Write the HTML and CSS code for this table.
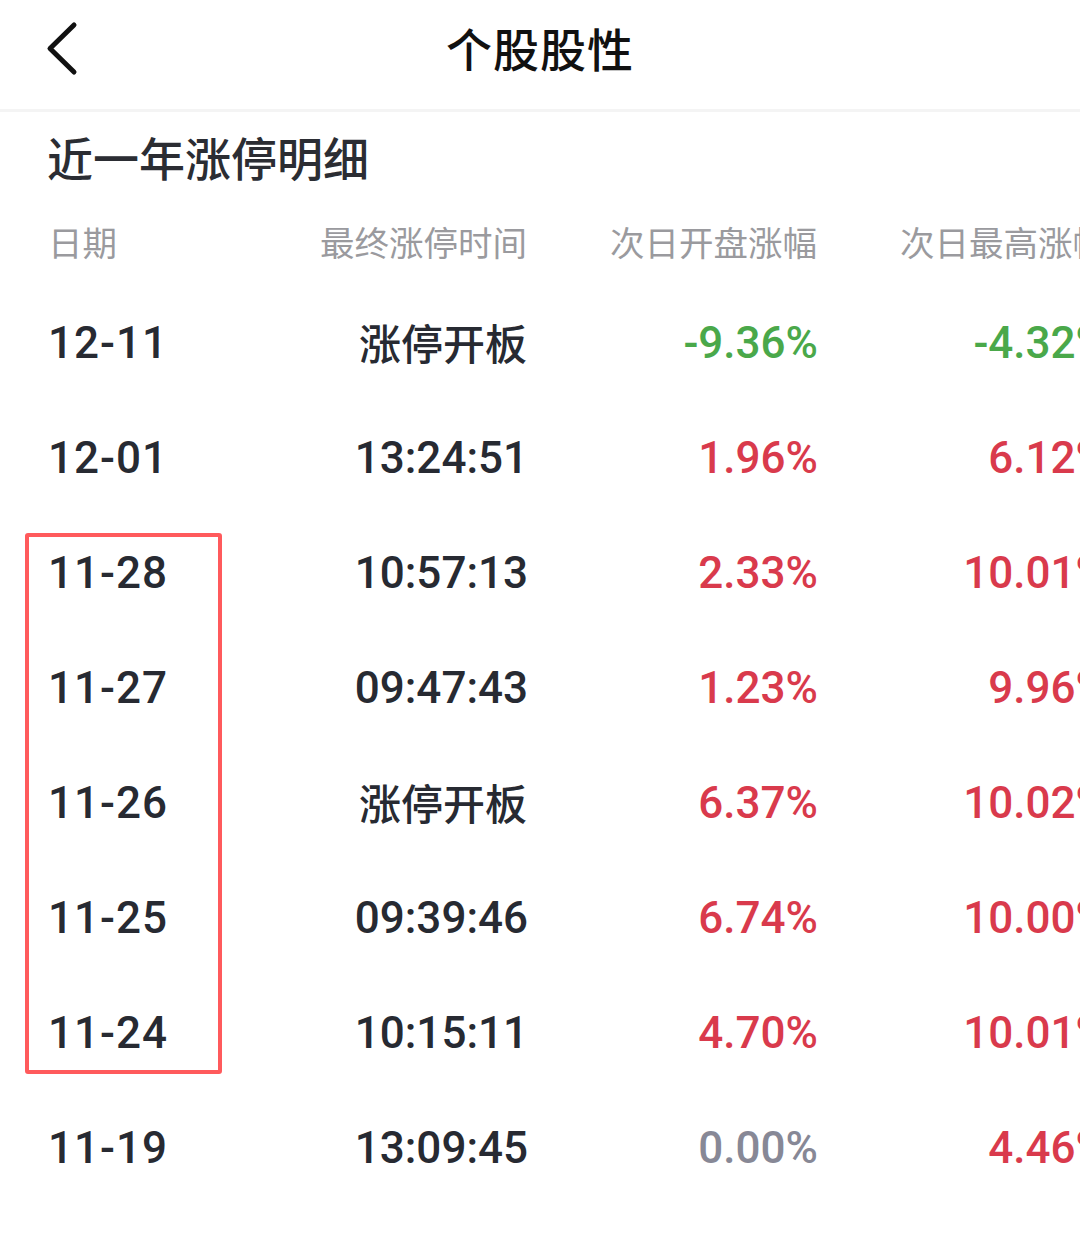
FILE: index.html
```html
<!DOCTYPE html>
<html lang="zh-CN">
<head>
<meta charset="utf-8">
<title>个股股性</title>
<link rel="stylesheet" href="styles.css">
</head>
<body>
<div class="page">
  <header class="nav">
    <div class="nav-left">
      <svg class="back" width="40" height="56" viewBox="0 0 40 56">
        <path d="M33 5 L9 28.5 L33 52" fill="none" stroke="#111" stroke-width="5" stroke-linecap="round" stroke-linejoin="round"/>
      </svg>
    </div>
    <h1 class="nav-title">个股股性</h1>
    <div></div>
  </header>

  <h2 class="section-title">近一年涨停明细</h2>

  <div class="table">
    <div class="row head">
      <span class="c1">日期</span>
      <span class="c2">最终涨停时间</span>
      <span class="c3">次日开盘涨幅</span>
      <span class="c4">次日最高涨幅</span>
    </div>
    <div class="row">
      <span class="c1 num">12-11</span>
      <span class="c2 cn">涨停开板</span>
      <span class="c3 num green">-9.36%</span>
      <span class="c4 num green">-4.32%</span>
    </div>
    <div class="row">
      <span class="c1 num">12-01</span>
      <span class="c2 num">13:24:51</span>
      <span class="c3 num red">1.96%</span>
      <span class="c4 num red">6.12%</span>
    </div>
    <div class="row">
      <span class="c1 num">11-28</span>
      <span class="c2 num">10:57:13</span>
      <span class="c3 num red">2.33%</span>
      <span class="c4 num red">10.01%</span>
    </div>
    <div class="row">
      <span class="c1 num">11-27</span>
      <span class="c2 num">09:47:43</span>
      <span class="c3 num red">1.23%</span>
      <span class="c4 num red">9.96%</span>
    </div>
    <div class="row">
      <span class="c1 num">11-26</span>
      <span class="c2 cn">涨停开板</span>
      <span class="c3 num red">6.37%</span>
      <span class="c4 num red">10.02%</span>
    </div>
    <div class="row">
      <span class="c1 num">11-25</span>
      <span class="c2 num">09:39:46</span>
      <span class="c3 num red">6.74%</span>
      <span class="c4 num red">10.00%</span>
    </div>
    <div class="row">
      <span class="c1 num">11-24</span>
      <span class="c2 num">10:15:11</span>
      <span class="c3 num red">4.70%</span>
      <span class="c4 num red">10.01%</span>
    </div>
    <div class="row">
      <span class="c1 num">11-19</span>
      <span class="c2 num">13:09:45</span>
      <span class="c3 num grey">0.00%</span>
      <span class="c4 num red">4.46%</span>
    </div>
  </div>

  <div class="highlight"></div>
</div>
</body>
</html>
```

FILE: styles.css
```css
html, body {
  margin: 0;
  padding: 0;
  background: #fff;
}
body {
  width: 1080px;
  height: 1241px;
  overflow: hidden;
  font-family: "Noto Sans CJK SC", "Noto Sans", sans-serif;
}
.page {
  position: relative;
  width: 1080px;
}
.nav {
  height: 112px;
  display: grid;
  grid-template-columns: 1fr auto 1fr;
  align-items: center;
  border-bottom: 3px solid #f4f4f4;
  box-sizing: border-box;
}
.nav-left {
  padding-left: 41px;
  display: flex;
  align-items: center;
  padding-bottom: 14px;
}
.back { display: block; }
.nav-title {
  margin: 0;
  font-size: 46px;
  font-weight: 500;
  color: #111;
  letter-spacing: 1px;
  line-height: 1;
  padding-bottom: 16px;
}
.section-title {
  margin: 0;
  height: 88px;
  line-height: 88px;
  padding-left: 47px;
  font-size: 46px;
  font-weight: 500;
  color: #2b2d33;
}
.table {
  width: 1107px;
}
.row {
  display: grid;
  grid-template-columns: 248px 279px 290px 290px;
  height: 115px;
  align-items: center;
}
.row.head {
  height: 82px;
  font-size: 34.5px;
  color: #9a9a9e;
  font-weight: 400;
  padding-bottom: 2px;
}
.c1 { padding-left: 48px; }
.c2, .c3, .c4 { text-align: right; }
.num {
  font-family: "Roboto", "Noto Sans", sans-serif;
  font-size: 44px;
  font-weight: 500;
  color: #272a32;
  letter-spacing: 0;
  padding-top: 3px;
}
.c1.num { letter-spacing: 1px; }
.c2.num, .c3.num, .c4.num { margin-right: -1px; }
.cn {
  font-size: 42px;
  font-weight: 500;
  color: #272a32;
}
.red { color: #d93a4c; }
.green { color: #4aa84a; }
.num.grey { color: #878896; }
.highlight {
  position: absolute;
  left: 25px;
  top: 533px;
  width: 197px;
  height: 541px;
  box-sizing: border-box;
  border: 4px solid #ff5a5c;
  border-radius: 3px;
}
```
